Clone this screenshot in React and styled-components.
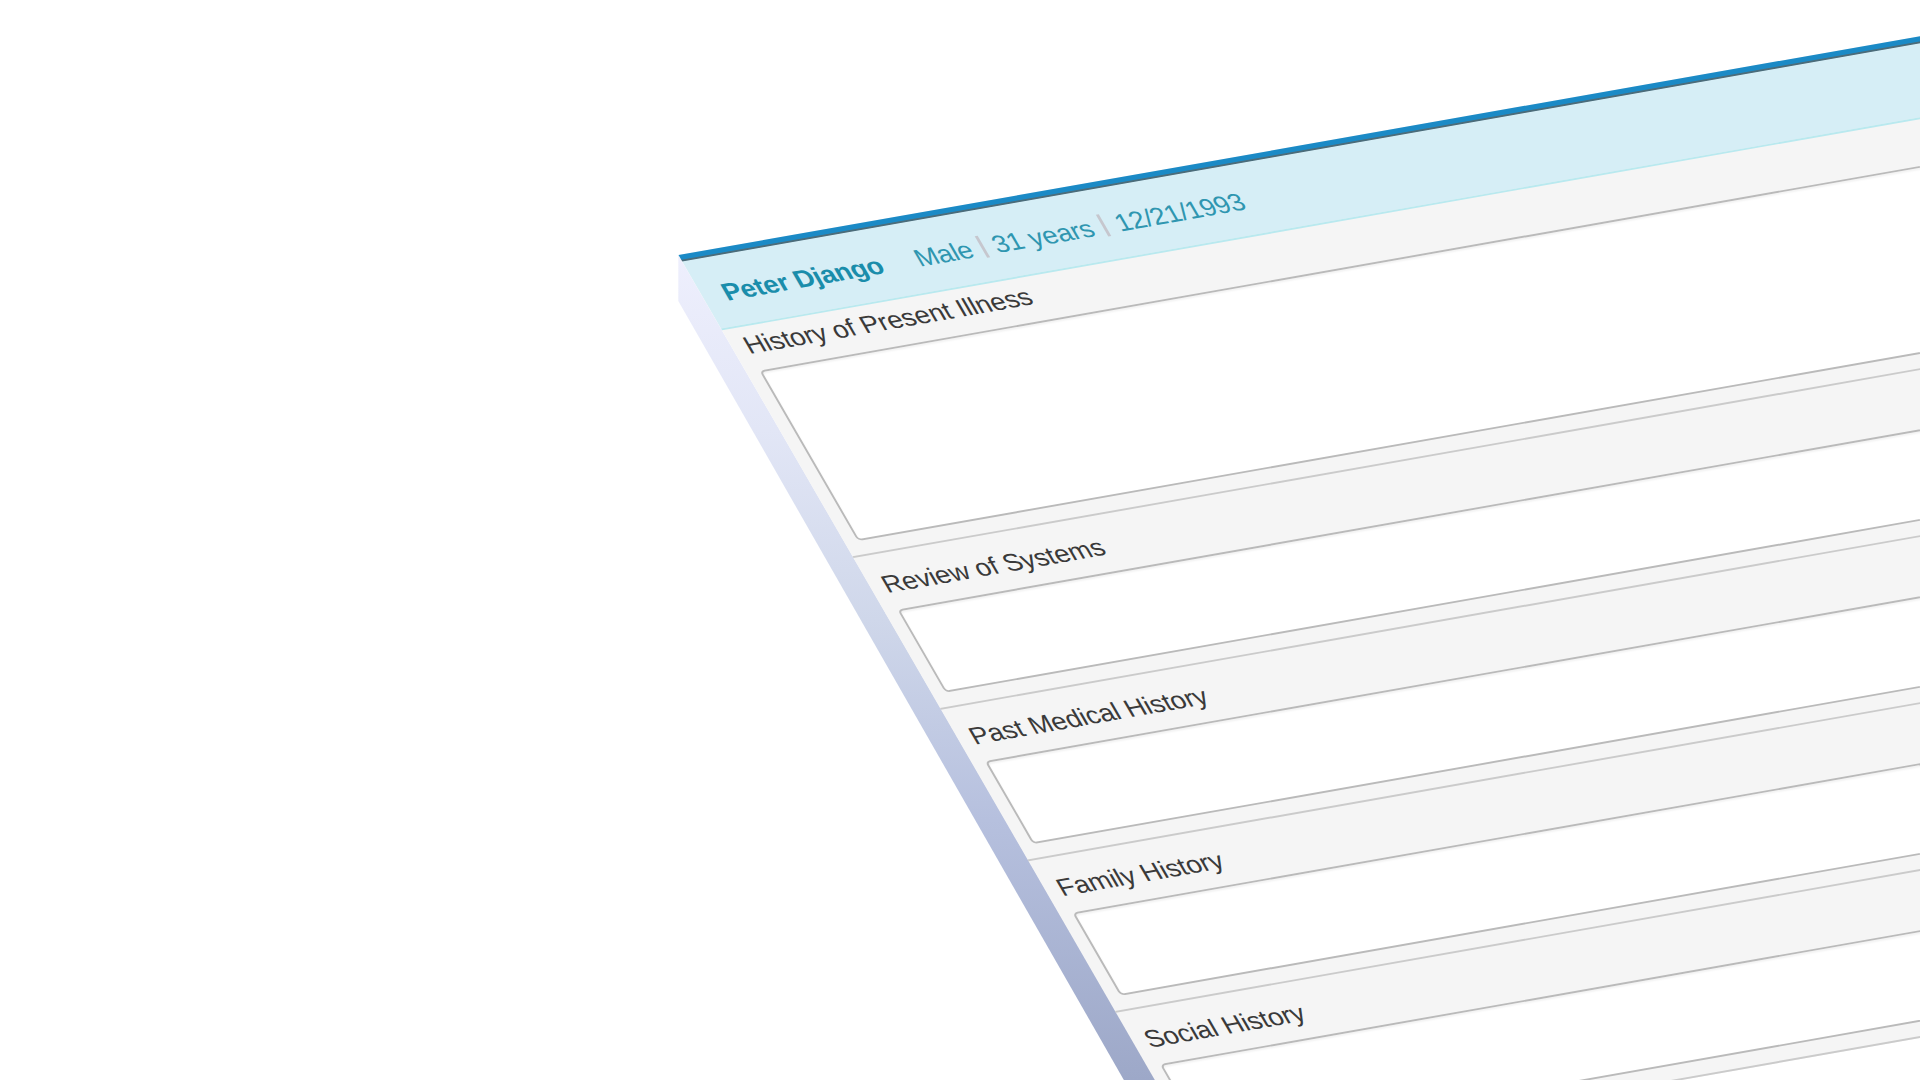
import React from 'react'
import styled, { createGlobalStyle } from 'styled-components'

const GlobalStyle = createGlobalStyle`
    html, body {
        margin: 0;
        background: #fff;
        overflow: hidden;
    }
`;

const sections = [
    { title: 'History of Present Illness', lead: 49, height: 197 },
    { title: 'Review of Systems', lead: 62, height: 96 },
    { title: 'Past Medical History', lead: 62, height: 96 },
    { title: 'Family History', lead: 62, height: 96 },
    { title: 'Social History', lead: 62, height: 96 },
]

function App() {
    return (
        <Stage>
            <GlobalStyle />
            <Side />
            <Sheet>
                <PatientBar>
                    <Name>Peter Django</Name>
                    <Detail>Male</Detail>
                    <Divider />
                    <Detail>31 years</Detail>
                    <Divider />
                    <Detail $tight>12/21/1993</Detail>
                </PatientBar>
                {sections.map(({ title, lead, height }) => (
                    <Section key={title}>
                        <Label $lead={lead}>{title}</Label>
                        <Field $height={height} aria-label={title} />
                    </Section>
                ))}
            </Sheet>
        </Stage>
    )
}

const Stage = styled.div`
    position: relative;
    width: 1920px;
    height: 1080px;
    overflow: hidden;
    background: #fff;
    font-family: "Liberation Sans", Arial, sans-serif;
`;

// thickness of the tilted sheet, visible along its left edge
const Side = styled.div`
    position: absolute;
    inset: 0;
    background: linear-gradient(180deg, #eeeffd 255px, #e2e6f6 430px, #cfd7ea 620px, #b6c0de 820px, #9da8c8 1080px);
    clip-path: polygon(678.3px 255px, 1157px 1082px, 1125px 1082px, 678.3px 301px);
`;

const Sheet = styled.div`
    position: absolute;
    top: 0;
    left: 0;
    width: 1900px;
    background: #f5f5f5;
    transform-origin: 0 0;
    transform: matrix(0.9848, -0.1736, 0.5, 0.866, 678.5, 255);
`;

const PatientBar = styled.div`
    display: flex;
    align-items: center;
    box-sizing: border-box;
    height: 87px;
    padding: 10px 21px 0;
    border-bottom: 2px solid #b9e9ef;
    background: linear-gradient(#1b8ac6 5px, #4b6c7a 6px, #4b6c7a 7px, #d6eef6 8px);
    color: #2f96b0;
    font-size: 26.67px;
    line-height: 30px;
    white-space: nowrap;
`;

const Name = styled.strong`
    margin-right: 34px;
    color: #1a8dab;
    letter-spacing: -0.25px;
`;

const Detail = styled.span`
    letter-spacing: ${({ $tight }) => ($tight ? '-0.45px' : '-0.2px')};
`;

const Divider = styled.i`
    width: 3px;
    height: 25px;
    margin: 0 9px 0 10px;
    background: #c6c7ce;

    &:nth-of-type(2) {
        margin-right: 11px;
    }
`;

const Section = styled.section`
    box-sizing: border-box;
    padding-bottom: 15px;
    border-bottom: 2px solid #cbcbcb;
`;

const Label = styled.div`
    display: flex;
    align-items: flex-end;
    box-sizing: border-box;
    height: ${({ $lead }) => $lead}px;
    padding: 0 0 13px 13px;
    color: #3a3a3a;
    font-size: 26.67px;
    line-height: 30px;
    letter-spacing: -0.2px;
`;

const Field = styled.div`
    box-sizing: border-box;
    height: ${({ $height }) => $height}px;
    margin: 0 13px;
    border: 2px solid #bababa;
    border-radius: 5px;
    background: #fff;
    box-shadow: inset 0 2px 2px rgba(0, 0, 0, 0.05);
`;

export default App
